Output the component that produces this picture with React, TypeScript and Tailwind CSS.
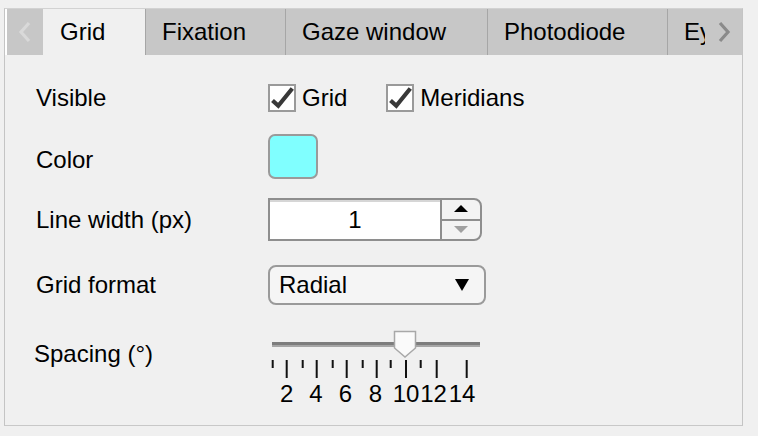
import React from "react";

const font = { fontFamily: '"Liberation Sans", Arial, sans-serif' };

function Check() {
  return (
    <div className="w-[28px] h-[28px] border-2 border-[#9a9a9a] bg-white box-border flex-none">
      <svg width="24" height="24" viewBox="0 0 24 24" className="block">
        <polyline points="2.5,14.5 8.3,19.8 22.3,2.5" fill="none" stroke="#383838" strokeWidth="4.2" strokeLinejoin="miter" strokeLinecap="butt" />
      </svg>
    </div>
  );
}

const ticks: { x: number; long: boolean }[] = [
  { x: 4.7, long: false },
  { x: 18.7, long: true },
  { x: 34.7, long: false },
  { x: 48.7, long: true },
  { x: 64.7, long: false },
  { x: 78.7, long: true },
  { x: 94.7, long: false },
  { x: 108.7, long: true },
  { x: 122.7, long: false },
  { x: 138, long: true },
  { x: 152.7, long: false },
  { x: 168.7, long: true },
  { x: 198.7, long: true },
];

const labels: { t: string; x: number }[] = [
  { t: "2", x: 18.7 },
  { t: "4", x: 48 },
  { t: "6", x: 77.5 },
  { t: "8", x: 107.5 },
  { t: "10", x: 138 },
  { t: "12", x: 165.5 },
  { t: "14", x: 194 },
];

function Slider() {
  return (
    <div className="relative w-[218px] h-[75px] flex-none">
      <svg width="218" height="50" className="absolute left-0 top-0">
        <rect x="4" y="12" width="208" height="3" fill="#7d7d7d" />
        <rect x="4" y="15" width="208" height="2" fill="#a6a6a6" />
        {ticks.map((t, i) => (
          <rect key={i} x={t.x - 1} y="30" width="2" height={t.long ? 18 : 8} fill="#111" />
        ))}
        <path d="M126.5,1.5 H147.5 V18 L137,27 L126.5,18 Z" fill="#fafafa" stroke="#a8a8a8" strokeWidth="1.5" />
      </svg>
      {labels.map((l, i) => (
        <span
          key={i}
          className="absolute top-[52px] -translate-x-1/2 text-[24px] leading-none text-black"
          style={{ left: l.x }}
        >
          {l.t}
        </span>
      ))}
    </div>
  );
}

export default function App() {
  return (
    <div className="w-[758px] h-[436px] bg-[#f0f0f0] pt-[8px] pl-[4px] overflow-hidden" style={font}>
      <div className="w-[739px] h-[418px] border-t border-l border-r border-b border-t-[#d2d2d2] border-l-[#c4c4c4] border-r-[#c4c4c4] border-b-[#c8c8c8] flex flex-col">
        {/* tab strip */}
        <div className="flex h-[46px] flex-none text-[24px] leading-none text-black">
          <div className="w-[38px] flex-none bg-[#c7c7c7] border-l-2 border-white flex items-center justify-center">
            <svg width="16" height="22" viewBox="0 0 16 22">
              <polyline points="12,2 4,11 12,20" fill="none" stroke="#d9d9d9" strokeWidth="3.2" />
            </svg>
          </div>
          <div className="w-[102px] flex-none bg-[#f0f0f0] flex items-center pl-[17px]">Grid</div>
          <div className="w-[140px] flex-none bg-[#c7c7c7] border-l border-[#a6a6a6] flex items-center pl-[16px]">Fixation</div>
          <div className="w-[202px] flex-none bg-[#c7c7c7] border-l border-[#a6a6a6] flex items-center pl-[16px]">Gaze window</div>
          <div className="w-[180px] flex-none bg-[#c7c7c7] border-l border-[#a6a6a6] flex items-center pl-[16px]">Photodiode</div>
          <div className="relative flex-1 bg-[#c7c7c7] border-l border-[#a6a6a6] flex items-center pl-[16px] overflow-hidden whitespace-nowrap">
            Eye tracker
            <div className="absolute right-0 top-0 bottom-0 w-[37px] bg-[#c7c7c7] flex items-center justify-center">
              <svg width="16" height="22" viewBox="0 0 16 22">
                <polyline points="4,2 12,11 4,20" fill="none" stroke="#8a8a8a" strokeWidth="3.2" />
              </svg>
            </div>
          </div>
        </div>

        {/* content */}
        <div className="flex flex-col pl-[31px] text-[24px] leading-none text-black">
          {/* Visible */}
          <div className="flex items-center h-[28px] mt-[29px]">
            <div className="w-[232px] flex-none">Visible</div>
            <Check />
            <span className="ml-[6px]">Grid</span>
            <div className="ml-[39px]">
              <Check />
            </div>
            <span className="ml-[6px]">Meridians</span>
          </div>

          {/* Color */}
          <div className="flex items-center h-[45px] mt-[22px]">
            <div className="w-[232px] flex-none pt-[7px]">Color</div>
            <div className="w-[50px] h-[45px] rounded-[7px] border-2 border-[#9a9a9a] bg-[#80ffff]" />
          </div>

          {/* Line width */}
          <div className="flex items-center h-[43px] mt-[19px]">
            <div className="w-[232px] flex-none">Line width (px)</div>
            <div className="flex h-[43px]">
              <div className="w-[172px] h-[43px] border-2 border-r-0 border-[#8e8e8e] bg-white flex items-center justify-center shadow-[inset_0_2px_0_#d6d6d6]">
                1
              </div>
              <div className="w-[42px] h-[43px] border-2 border-[#8e8e8e] rounded-r-[8px] bg-[#f3f3f3] flex flex-col">
                <div className="flex-1 flex items-center justify-center border-b-2 border-[#8e8e8e]">
                  <svg width="14" height="8" viewBox="0 0 14 8"><polygon points="0,7 14,7 7,0" fill="#000" /></svg>
                </div>
                <div className="flex-1 flex items-center justify-center">
                  <svg width="14" height="8" viewBox="0 0 14 8"><polygon points="0,0 14,0 7,7" fill="#a0a0a0" /></svg>
                </div>
              </div>
            </div>
          </div>

          {/* Grid format */}
          <div className="flex items-center h-[40px] mt-[24px]">
            <div className="w-[232px] flex-none">Grid format</div>
            <div className="w-[218px] h-[40px] rounded-[8px] border-2 border-[#9a9a9a] bg-[#f5f5f5] flex items-center pl-[9px] pr-[15px]">
              <span className="flex-1">Radial</span>
              <svg width="14" height="12" viewBox="0 0 14 12"><polygon points="0,0 14,0 7,12" fill="#000" /></svg>
            </div>
          </div>

          {/* Spacing */}
          <div className="flex items-start mt-[25px]">
            <div className="w-[232px] flex-none -ml-[2px] mr-[2px] mt-[12px]">Spacing (°)</div>
            <Slider />
          </div>
        </div>
      </div>
    </div>
  );
}
